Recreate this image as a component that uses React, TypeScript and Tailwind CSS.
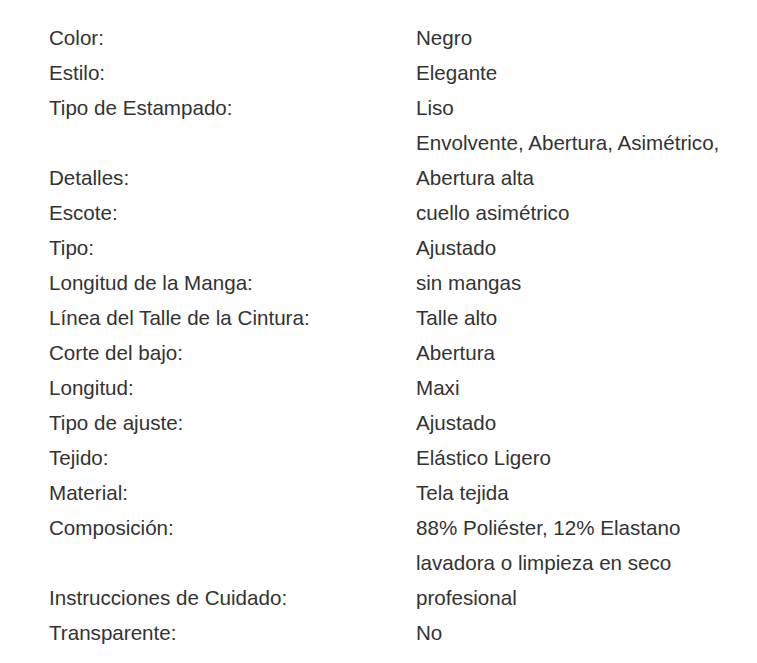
const specs: [string, string][] = [
  ["Color:", "Negro"],
  ["Estilo:", "Elegante"],
  ["Tipo de Estampado:", "Liso"],
  ["Detalles:", "Envolvente, Abertura, Asimétrico, Abertura alta"],
  ["Escote:", "cuello asimétrico"],
  ["Tipo:", "Ajustado"],
  ["Longitud de la Manga:", "sin mangas"],
  ["Línea del Talle de la Cintura:", "Talle alto"],
  ["Corte del bajo:", "Abertura"],
  ["Longitud:", "Maxi"],
  ["Tipo de ajuste:", "Ajustado"],
  ["Tejido:", "Elástico Ligero"],
  ["Material:", "Tela tejida"],
  ["Composición:", "88% Poliéster, 12% Elastano"],
  ["Instrucciones de Cuidado:", "lavadora o limpieza en seco profesional"],
  ["Transparente:", "No"],
];

export default function App() {
  return (
    <div className="min-h-[663px] bg-white pl-[49px] pt-[20px] font-['Liberation_Sans',Arial,sans-serif] text-[20.6px] leading-[35px] text-[#333]">
      <div className="grid grid-cols-[367px_330px]">
        {specs.map(([label, value]) => (
          <div key={label} className="contents">
            <div className="self-end">{label}</div>
            <div>{value}</div>
          </div>
        ))}
      </div>
    </div>
  );
}
